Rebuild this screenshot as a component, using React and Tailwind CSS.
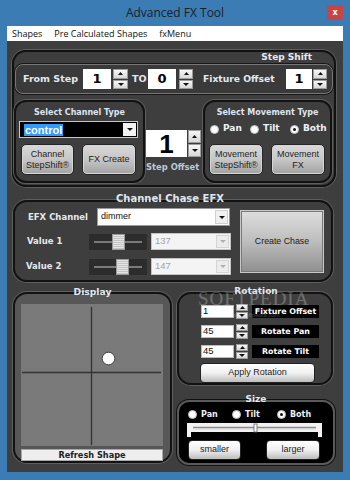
import React from "react";

const BOLD = "font-['DejaVu_Sans',sans-serif] font-bold";
const SANS = "font-['Liberation_Sans',Arial,sans-serif]";

function TriUp() {
  return (
    <svg width="5" height="3" viewBox="0 0 5 3">
      <path d="M0 3L2.5 0L5 3Z" fill="#111" />
    </svg>
  );
}
function TriDown({ color = "#111" }) {
  return (
    <svg width="6" height="3" viewBox="0 0 6 3">
      <path d="M0 0L6 0L3 3Z" fill={color} />
    </svg>
  );
}

function Spinner({ className }) {
  return (
    <div className={`flex flex-col gap-[1px] shrink-0 ${className}`}>
      <div className="flex-1 flex items-center justify-center bg-linear-to-b from-[#f7f7f7] to-[#d8d8d8] border border-[#9c9c9c]">
        <TriUp />
      </div>
      <div className="flex-1 flex items-center justify-center bg-linear-to-b from-[#f7f7f7] to-[#d8d8d8] border border-[#9c9c9c]">
        <TriDown />
      </div>
    </div>
  );
}

function Radio({ checked }) {
  return (
    <div className="w-[9px] h-[9px] rounded-full bg-white border border-[#bbb] flex items-center justify-center shrink-0">
      {checked && <div className="w-[3px] h-[3px] rounded-full bg-[#111]" />}
    </div>
  );
}

function GrayBtn({ className, children }) {
  return (
    <div
      className={`flex items-center justify-center text-center rounded-[5px] border border-[#262626] shadow-[inset_0_0_0_1px_#d6d6d6] bg-linear-to-b from-[#d9d9d9] via-[#c6c6c6] to-[#a2a2a2] text-[#1f1f1f] text-[9px] leading-[11px] ${SANS} ${className}`}
    >
      {children}
    </div>
  );
}

function WhiteBtn({ className, children }) {
  return (
    <div
      className={`flex items-center justify-center rounded-[4px] border border-[#222] bg-linear-to-b from-[#ffffff] via-[#f0f0f0] to-[#bdbdbd] text-[#222] text-[9px] ${SANS} ${className}`}
    >
      {children}
    </div>
  );
}

function Slider({ pos }) {
  return (
    <div className="relative w-[58px] h-[16px] bg-[#2c2c2c] shrink-0">
      <div className="absolute left-[5px] right-[5px] top-[7px] h-[2px] bg-[#7a7a7a]" />
      <div
        className={`absolute top-0 ${pos} w-[13px] h-[16px] border border-[#9a9a9a] bg-[repeating-linear-gradient(0deg,#c4c4c4_0px,#c4c4c4_1px,#e4e4e4_1px,#e4e4e4_2px)]`}
      />
    </div>
  );
}

function DisabledSelect({ value }) {
  return (
    <div className="ml-[4px] w-[80px] h-[17px] bg-[#f4f4f4] border border-[#c4c4c4] flex items-center shrink-0">
      <span className={`pl-[3px] text-[9.5px] text-[#a3a3a3] ${SANS}`}>{value}</span>
      <div className="ml-auto mr-[1px] w-[13px] h-[13px] bg-[#ececec] border border-[#d4d4d4] flex items-center justify-center">
        <TriDown color="#b0b0b0" />
      </div>
    </div>
  );
}

const FRAME = "rounded-[14px] border-2 border-[#121212] shadow-[0_0_0_1px_#5e5e5e]";
const PANEL = "rounded-[12px] border-2 border-[#121212] shadow-[0_0_0_1px_#5e5e5e]";

export default function App() {
  return (
    <div className="w-[350px] h-[480px] bg-[#3b7cb4] flex flex-col overflow-hidden">
      {/* Title bar */}
      <div className="h-[26px] flex items-start shrink-0">
        <div className="flex-1 pl-[23px] text-center text-[12px] leading-[26px] text-[#1e1e1e] font-['Open_Sans',sans-serif]">
          Advanced FX Tool
        </div>
        <div className="mt-[5px] mr-[7px] w-[16px] h-[15px] bg-[#c74545] flex items-center justify-center text-white text-[8px] font-bold leading-none font-['DejaVu_Sans',sans-serif]">
          x
        </div>
      </div>

      {/* Menu bar */}
      <div className="mx-[7px] h-[15px] bg-white flex items-center gap-[12px] pl-[5px] text-[9px] text-[#111] font-['Open_Sans',sans-serif] shrink-0">
        <span>Shapes</span>
        <span>Pre Calculated Shapes</span>
        <span>fxMenu</span>
      </div>

      {/* Content */}
      <div className="mx-[7px] h-[431px] bg-[#3e3e3e] flex flex-col relative shrink-0">
        {/* Step Shift */}
        <div className={`mt-[9px] ml-[5px] w-[324px] h-[137px] ${FRAME} flex flex-col`}>
          <div className={`-mt-[2px] h-[14px] pr-[22px] text-right text-[9px] leading-[14px] text-[#e6e9ee] ${BOLD}`}>
            Step Shift
          </div>
          <div className="ml-[1px] w-[318px] h-[30px] rounded-[8px] border border-[#777] shadow-[0_0_0_1px_#181818] bg-[#3a3a3a] flex items-center">
            <div className={`w-[67px] pl-[7px] text-[9.5px] text-[#e4e8ee] ${BOLD}`}>From Step</div>
            <div className={`w-[28px] h-[20px] bg-white flex items-center justify-center text-[13px] text-black ${BOLD}`}>1</div>
            <Spinner className="ml-[2px] w-[15px] h-[20px]" />
            <div className={`ml-[4px] w-[16px] text-[9.5px] text-[#e4e8ee] ${BOLD}`}>TO</div>
            <div className={`w-[28px] h-[20px] bg-white flex items-center justify-center text-[13px] text-black ${BOLD}`}>0</div>
            <Spinner className="ml-[3px] w-[14px] h-[20px]" />
            <div className={`ml-[10px] w-[83px] text-[9.2px] text-[#e4e8ee] ${BOLD}`}>Fixture Offset</div>
            <div className={`w-[26px] h-[20px] bg-white flex items-center justify-center text-[13px] text-black ${BOLD}`}>1</div>
            <Spinner className="ml-[1px] w-[14px] h-[20px]" />
          </div>

          <div className="mt-[6px] flex items-start">
            {/* Select Channel Type */}
            <div className={`w-[131px] h-[83px] ${PANEL} flex flex-col`}>
              <div className={`mt-[5px] h-[12px] text-center text-[8px] leading-[12px] text-[#dfe5ee] ${BOLD}`}>
                Select Channel Type
              </div>
              <div className="mt-[2px] ml-[3px] w-[119px] h-[17px] bg-black border border-[#c8c8c8] flex items-center">
                <span className={`ml-[4px] bg-[#3399ff] text-white text-[11px] font-bold px-[1px] leading-[12px] ${SANS}`}>
                  control
                </span>
                <div className="ml-auto mr-[1px] w-[13px] h-[13px] bg-[#f2f2f2] flex items-center justify-center">
                  <TriDown />
                </div>
              </div>
              <div className="mt-[6px] ml-[5px] flex gap-[8px]">
                <GrayBtn className="w-[53px] h-[31px]">
                  Channel
                  <br />
                  StepShift®
                </GrayBtn>
                <GrayBtn className="w-[54px] h-[31px]">FX Create</GrayBtn>
              </div>
            </div>

            {/* Step Offset */}
            <div className="w-[58px] flex flex-col pt-[30px]">
              <div className="flex items-start">
                <div className={`ml-[1px] w-[41px] h-[27px] bg-white flex items-center justify-center text-[26px] leading-none text-black font-bold ${SANS}`}>
                  1
                </div>
                <Spinner className="ml-[1px] w-[13px] h-[27px]" />
              </div>
              <div className={`mt-[5px] ml-[1px] text-[8.4px] leading-[10px] text-[#b9c9da] ${BOLD}`}>Step Offset</div>
            </div>

            {/* Select Movement Type */}
            <div className={`w-[129px] h-[83px] ${PANEL} flex flex-col`}>
              <div className={`mt-[5px] h-[12px] text-center text-[8px] leading-[12px] text-[#dfe5ee] ${BOLD}`}>
                Select Movement Type
              </div>
              <div className="mt-[5px] h-[10px] ml-[5px] flex items-center">
                <div className="w-[40px] flex items-center">
                  <Radio />
                  <span className={`ml-[4px] text-[9px] text-[#eef1f5] ${BOLD}`}>Pan</span>
                </div>
                <div className="w-[40px] flex items-center">
                  <Radio />
                  <span className={`ml-[4px] text-[9px] text-[#eef1f5] ${BOLD}`}>Tilt</span>
                </div>
                <div className="flex items-center">
                  <Radio checked />
                  <span className={`ml-[4px] text-[9px] text-[#eef1f5] ${BOLD}`}>Both</span>
                </div>
              </div>
              <div className="mt-[10px] ml-[4px] flex gap-[8px]">
                <GrayBtn className="w-[54px] h-[31px]">
                  Movement
                  <br />
                  StepShift®
                </GrayBtn>
                <GrayBtn className="w-[54px] h-[31px]">
                  Movement
                  <br />
                  FX
                </GrayBtn>
              </div>
            </div>
          </div>
        </div>

        {/* Channel Chase EFX */}
        <div className={`relative z-10 mt-[5px] ml-[6px] w-[320px] pr-[6px] h-[13px] text-center text-[10px] leading-[13px] text-[#dfe6ee] ${BOLD}`}>
          Channel Chase EFX
        </div>
        <div className={`-mt-[5px] ml-[6px] w-[320px] h-[82px] ${FRAME} flex items-start`}>
          <div className="w-[216px] flex flex-col pt-[6px]">
            <div className="h-[18px] flex items-center">
              <div className={`w-[82px] pl-[13px] text-[8.5px] text-[#e4e8ee] ${BOLD}`}>EFX Channel</div>
              <div className="w-[133px] h-[18px] bg-white border border-[#9a9a9a] flex items-center">
                <span className={`pl-[3px] text-[9px] text-[#111] ${SANS}`}>dimmer</span>
                <div className="ml-auto mr-[1px] w-[13px] h-[14px] bg-[#f0f0f0] border border-[#d0d0d0] flex items-center justify-center">
                  <TriDown />
                </div>
              </div>
            </div>
            <div className="mt-[7px] h-[17px] flex items-center">
              <div className={`w-[74px] pl-[12px] text-[8.5px] text-[#e4e8ee] ${BOLD}`}>Value 1</div>
              <Slider pos="left-[23px]" />
              <DisabledSelect value="137" />
            </div>
            <div className="mt-[8px] h-[17px] flex items-center">
              <div className={`w-[74px] pl-[11px] text-[8.5px] text-[#e4e8ee] ${BOLD}`}>Value 2</div>
              <Slider pos="left-[27px]" />
              <DisabledSelect value="147" />
            </div>
          </div>
          <div className={`ml-[9px] mt-[8px] w-[84px] h-[63px] border border-[#c8c8c8] shadow-[inset_0_0_0_1px_#7a7a7a] bg-linear-to-b from-[#dedede] via-[#bdbdbd] to-[#8f8f8f] flex items-center justify-center text-[8.8px] text-[#1a1a1a] ${SANS}`}>
            Create Chase
          </div>
        </div>

        {/* Bottom row */}
        <div className="mt-[3px] flex items-start">
          {/* Display */}
          <div className="ml-[6px] w-[159px] flex flex-col">
            <div className={`relative z-10 h-[13px] text-center text-[9.2px] leading-[13px] text-[#e4e8ee] ${BOLD}`}>Display</div>
            <div className={`-mt-[6px] h-[171px] ${FRAME} bg-[#575757] flex flex-col pt-[10px] pl-[6px]`}>
              <svg width="142" height="142" viewBox="0 0 142 142" className="block">
                <rect x="0" y="0" width="142" height="142" fill="#7a7a7a" />
                <line x1="70.5" y1="3" x2="70.5" y2="141" stroke="#333" strokeWidth="1.3" />
                <line x1="1" y1="68.5" x2="140" y2="68.5" stroke="#333" strokeWidth="1.3" />
                <circle cx="87.5" cy="54.5" r="6.3" fill="#fff" stroke="#444" strokeWidth="1" />
              </svg>
              <div className={`mt-[3px] w-[142px] h-[12px] bg-[#eeeeee] border border-[#a8a8a8] flex items-center justify-center text-[8.2px] text-[#222] ${BOLD}`}>
                Refresh Shape
              </div>
            </div>
          </div>

          {/* Rotation + Size */}
          <div className="ml-[5px] w-[158px] flex flex-col">
            <div className={`relative z-10 h-[13px] text-center text-[9px] leading-[13px] text-[#e4e8ee] ${BOLD}`}>Rotation</div>
            <div className={`-mt-[6px] w-[156px] h-[93px] ${FRAME} flex flex-col pt-[11px] pl-[22px]`}>
              {[
                ["1", "Fixture Offset"],
                ["45", "Rotate Pan"],
                ["45", "Rotate Tilt"],
              ].map(([v, l], i) => (
                <div key={l} className={`flex items-center h-[13px] ${i > 0 ? "mt-[7px]" : ""}`}>
                  <div className={`w-[33px] h-[13px] bg-white border border-[#bbb] flex items-center pl-[1px] text-[9.5px] text-[#111] ${SANS}`}>
                    {v}
                  </div>
                  <Spinner className="ml-[2px] w-[12px] h-[15px]" />
                  <div className={`ml-[4px] w-[67px] h-[13px] bg-black flex items-center justify-center text-[7.9px] text-white ${BOLD}`}>
                    {l}
                  </div>
                </div>
              ))}
              <WhiteBtn className="mt-[5px] -ml-[1px] w-[115px] h-[20px] rounded-[3px] text-[9px]">Apply Rotation</WhiteBtn>
            </div>

            <div className={`relative z-10 mt-[8px] h-[13px] text-center text-[9px] leading-[13px] text-[#e4e8ee] ${BOLD}`}>Size</div>
            <div className={`-mt-[6px] w-[158px] h-[65px] rounded-[12px] border-2 border-[#5a5a5a] shadow-[0_0_0_1px_#111] bg-black flex flex-col`}>
              <div className="mt-[8px] h-[9px] pl-[9px] flex items-center">
                <div className="w-[44px] flex items-center">
                  <Radio />
                  <span className={`ml-[4px] text-[8px] text-[#eef1f5] ${BOLD}`}>Pan</span>
                </div>
                <div className="w-[45px] flex items-center">
                  <Radio />
                  <span className={`ml-[4px] text-[8px] text-[#eef1f5] ${BOLD}`}>Tilt</span>
                </div>
                <div className="flex items-center">
                  <Radio checked />
                  <span className={`ml-[4px] text-[8px] text-[#eef1f5] ${BOLD}`}>Both</span>
                </div>
              </div>
              <svg width="135" height="14" viewBox="0 0 135 14" className="block mt-[4px] ml-[8px]">
                <rect x="0" y="0" width="135" height="9" fill="#f2f2f2" />
                <rect x="0" y="9" width="4" height="5" fill="#f2f2f2" />
                <rect x="131" y="9" width="4" height="5" fill="#f2f2f2" />
                <line x1="6" y1="4.5" x2="129" y2="4.5" stroke="#8a8a8a" strokeWidth="1.5" />
                <line x1="6" y1="6" x2="129" y2="6" stroke="#d0d0d0" strokeWidth="1" />
                <rect x="67" y="1" width="3" height="8" fill="#fafafa" stroke="#6a6a6a" strokeWidth="0.8" />
              </svg>
              <div className="mt-[3px] ml-[9px] flex">
                <WhiteBtn className="w-[53px] h-[20px] text-[9.5px]">smaller</WhiteBtn>
                <WhiteBtn className="ml-[25px] w-[54px] h-[20px] text-[9.5px]">larger</WhiteBtn>
              </div>
            </div>
          </div>
        </div>

        {/* Watermark overlay */}
        <div className="absolute left-[191px] top-[244px] pointer-events-none flex flex-col items-center opacity-25">
          <span className="text-[19px] tracking-[1px] text-white font-['Liberation_Serif',serif]">SOFTPEDIA</span>
          <span className="-mt-[3px] text-[6px] text-white font-['Liberation_Sans',sans-serif]">www.softpedia.com</span>
        </div>
      </div>
    </div>
  );
}
